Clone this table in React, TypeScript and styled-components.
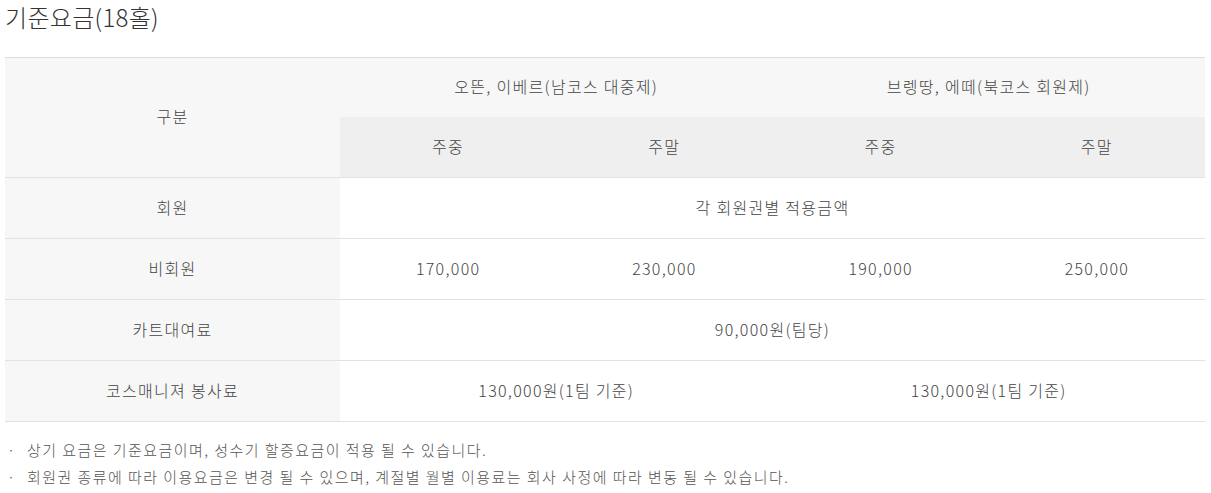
import styled, { createGlobalStyle } from 'styled-components';

const GlobalStyle = createGlobalStyle`
  body {
    margin: 0;
    background: #ffffff;
    font-family: "Noto Sans CJK KR", "Noto Sans", sans-serif;
    font-weight: 300;
    color: #333333;
  }
`;

const Wrap = styled.div`
  padding: 0 6px 0 5px;
`;

const Title = styled.h3`
  margin: 0;
  height: 57px;
  font-size: 24px;
  font-weight: 300;
  line-height: 33px;
  color: #333333;
  letter-spacing: 0.3px;
`;

const Table = styled.table`
  width: 1200px;
  border-collapse: collapse;
  table-layout: fixed;
  border-top: 1px solid #dcdcdc;
  font-size: 16px;
  letter-spacing: 1.3px;
  color: #444444;
`;

const Th = styled.th<{ $sub?: boolean }>`
  height: ${(p) => (p.$sub ? '57px' : '56px')};
  padding: 0 0 3px;
  font-weight: 300;
  text-align: center;
  background: ${(p) => (p.$sub ? '#efefef' : '#f7f7f7')};
  border-bottom: ${(p) => (p.$sub ? '1px solid #e2e2e2' : 'none')};
`;

const HeadCorner = styled(Th)`
  border-bottom: 1px solid #e2e2e2;
`;

const RowHead = styled.th`
  height: 57px;
  padding: 0 0 3px;
  font-weight: 300;
  text-align: center;
  background: #f7f7f7;
  border-bottom: 1px solid #e2e2e2;
`;

const Td = styled.td`
  height: 57px;
  padding: 0 0 3px;
  text-align: center;
  border-bottom: 1px solid #e2e2e2;
`;

const Notes = styled.ul`
  list-style: none;
  margin: 0;
  padding: 14px 0 0 0;
`;

const Note = styled.li`
  position: relative;
  padding-left: 22px;
  font-size: 15px;
  letter-spacing: 1.45px;
  line-height: 27px;
  color: #555555;
  &::before {
    content: '·';
    position: absolute;
    left: 2px;
    top: 0;
  }
`;

export default function App() {
  return (
    <Wrap>
      <GlobalStyle />
      <Title>기준요금(18홀)</Title>
      <Table>
        <colgroup>
          <col style={{ width: 335 }} />
          <col />
          <col />
          <col />
          <col />
        </colgroup>
        <thead>
          <tr>
            <HeadCorner rowSpan={2}>구분</HeadCorner>
            <Th colSpan={2}>오뜬, 이베르(남코스 대중제)</Th>
            <Th colSpan={2}>브렝땅, 에떼(북코스 회원제)</Th>
          </tr>
          <tr>
            <Th $sub>주중</Th>
            <Th $sub>주말</Th>
            <Th $sub>주중</Th>
            <Th $sub>주말</Th>
          </tr>
        </thead>
        <tbody>
          <tr>
            <RowHead>회원</RowHead>
            <Td colSpan={4}>각 회원권별 적용금액</Td>
          </tr>
          <tr>
            <RowHead>비회원</RowHead>
            <Td>170,000</Td>
            <Td>230,000</Td>
            <Td>190,000</Td>
            <Td>250,000</Td>
          </tr>
          <tr>
            <RowHead>카트대여료</RowHead>
            <Td colSpan={4}>90,000원(팀당)</Td>
          </tr>
          <tr>
            <RowHead>코스매니져 봉사료</RowHead>
            <Td colSpan={2}>130,000원(1팀 기준)</Td>
            <Td colSpan={2}>130,000원(1팀 기준)</Td>
          </tr>
        </tbody>
      </Table>
      <Notes>
        <Note>상기 요금은 기준요금이며, 성수기 할증요금이 적용 될 수 있습니다.</Note>
        <Note>회원권 종류에 따라 이용요금은 변경 될 수 있으며, 계절별 월별 이용료는 회사 사정에 따라 변동 될 수 있습니다.</Note>
      </Notes>
    </Wrap>
  );
}
